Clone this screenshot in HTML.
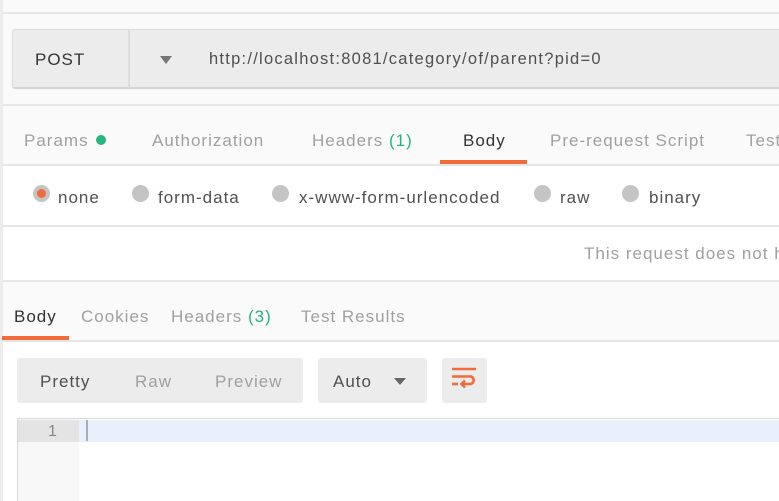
<!DOCTYPE html>
<html><head><style>
*{margin:0;padding:0;box-sizing:border-box}
body{width:779px;height:501px;overflow:hidden;background:#fafafa;font-family:"Liberation Sans",sans-serif;position:relative;color:#505050;letter-spacing:1px}
.a{position:absolute;white-space:nowrap}
.line{position:absolute;left:3px;right:0;height:2px;background:#e6e6e6}
.g{color:#a0a0a0}
.grn{color:#26b47f}
.rad{position:absolute;width:17px;height:17px;border-radius:50%;background:#c4c4c4;top:185px}
</style></head><body>
<div class="a" style="left:0;top:0;width:3px;height:501px;background:#ececec"></div>
<div class="line" style="top:12px"></div>

<div class="a" style="left:12px;top:29px;width:767px;height:60px;background:#ececec;border:1px solid #dcdcdc;border-right:none;border-radius:3px 0 0 3px;border-bottom:2px solid #d4d4d4"></div>
<div class="a" style="left:128px;top:30px;width:2px;height:58px;background:#dcdcdc"></div>
<div class="a" style="left:35px;top:50px;font-size:17px;color:#333">POST</div>
<div class="a" style="left:160px;top:56px;width:0;height:0;border-left:6px solid transparent;border-right:6px solid transparent;border-top:8px solid #777"></div>
<div class="a" style="left:209px;top:50px;font-size:16.5px;color:#505050;letter-spacing:1.25px">http://localhost:8081/category/of/parent?pid=0</div>
<div class="line" style="top:104px"></div>

<div class="a g" style="left:24px;top:131px;font-size:17px">Params</div>
<div class="a" style="left:96px;top:135px;width:10px;height:10px;border-radius:50%;background:#26b47f"></div>
<div class="a g" style="left:152px;top:131px;font-size:17px">Authorization</div>
<div class="a g" style="left:312px;top:131px;font-size:17px">Headers <span class="grn">(1)</span></div>
<div class="a" style="left:463px;top:131px;font-size:17px;color:#333">Body</div>
<div class="a g" style="left:550px;top:131px;font-size:17px">Pre-request Script</div>
<div class="a g" style="left:746px;top:131px;font-size:17px">Tests</div>
<div class="a" style="left:440px;top:160px;width:87px;height:4px;background:#f26b3a"></div>
<div class="line" style="top:164px"></div>

<div class="a" style="left:3px;top:166px;right:0;height:60px;background:#fff"></div>
<div class="rad" style="left:33px"></div>
<div class="a" style="left:37px;top:189px;width:9px;height:9px;border-radius:50%;background:#f26b3a"></div>
<div class="a" style="left:58px;top:188px;font-size:17px">none</div>
<div class="rad" style="left:132px"></div>
<div class="a" style="left:158px;top:188px;font-size:17px">form-data</div>
<div class="rad" style="left:272px"></div>
<div class="a" style="left:299px;top:188px;font-size:17px">x-www-form-urlencoded</div>
<div class="rad" style="left:534px"></div>
<div class="a" style="left:560px;top:188px;font-size:17px">raw</div>
<div class="rad" style="left:622px"></div>
<div class="a" style="left:649px;top:188px;font-size:17px">binary</div>
<div class="line" style="top:225px"></div>
<div class="a" style="left:3px;top:227px;right:0;height:53px;background:#fff"></div>
<div class="a g" style="left:584px;top:244px;font-size:17px">This request does not have a body</div>
<div class="line" style="top:280px"></div>

<div class="a" style="left:14px;top:307px;font-size:17px;color:#333">Body</div>
<div class="a g" style="left:81px;top:307px;font-size:17px">Cookies</div>
<div class="a g" style="left:171px;top:307px;font-size:17px">Headers <span class="grn">(3)</span></div>
<div class="a g" style="left:301px;top:307px;font-size:17px">Test Results</div>
<div class="a" style="left:2px;top:336px;width:67px;height:4px;background:#f26b3a"></div>
<div class="line" style="top:340px"></div>
<div class="a" style="left:3px;top:342px;right:0;bottom:0;background:#fff"></div>

<div class="a" style="left:17px;top:358px;width:286px;height:45px;background:#ececec;border-radius:3px"></div>
<div class="a" style="left:40px;top:372px;font-size:17px;color:#505050">Pretty</div>
<div class="a g" style="left:135px;top:372px;font-size:17px">Raw</div>
<div class="a g" style="left:215px;top:372px;font-size:17px">Preview</div>
<div class="a" style="left:318px;top:358px;width:109px;height:45px;background:#ececec;border-radius:3px"></div>
<div class="a" style="left:333px;top:372px;font-size:17px;color:#505050">Auto</div>
<div class="a" style="left:394px;top:378px;width:0;height:0;border-left:6px solid transparent;border-right:6px solid transparent;border-top:7px solid #666"></div>
<div class="a" style="left:442px;top:358px;width:45px;height:45px;background:#ececec;border-radius:3px"></div>
<svg class="a" style="left:452px;top:367px" width="26" height="26" viewBox="0 0 26 26"><g stroke="#f26b3a" stroke-width="2.6" fill="none"><path d="M0 2H24"/><path d="M0 9.5H20"/><path d="M0 17H6"/><path d="M10 17H19a4 4 0 0 0 0-7.5"/><path d="M13 13.5L9.5 17L13 20.5"/></g></svg>

<div class="a" style="left:17px;top:418px;right:0;bottom:0;border:1px solid #d8d8d8;border-right:none;border-bottom:none;background:#fff"></div>
<div class="a" style="left:18px;top:419px;width:61px;bottom:0;background:#f8f8f8"></div>
<div class="a" style="left:18px;top:420px;width:61px;height:22px;background:#e4e4e4"></div>
<div class="a" style="left:79px;top:420px;right:0;height:22px;background:#e8f1fb"></div>
<div class="a" style="left:86px;top:420px;width:2px;height:21px;background:#aab"></div>
<div class="a g" style="left:48px;top:423px;font-size:16px;color:#888">1</div>
</body></html>
